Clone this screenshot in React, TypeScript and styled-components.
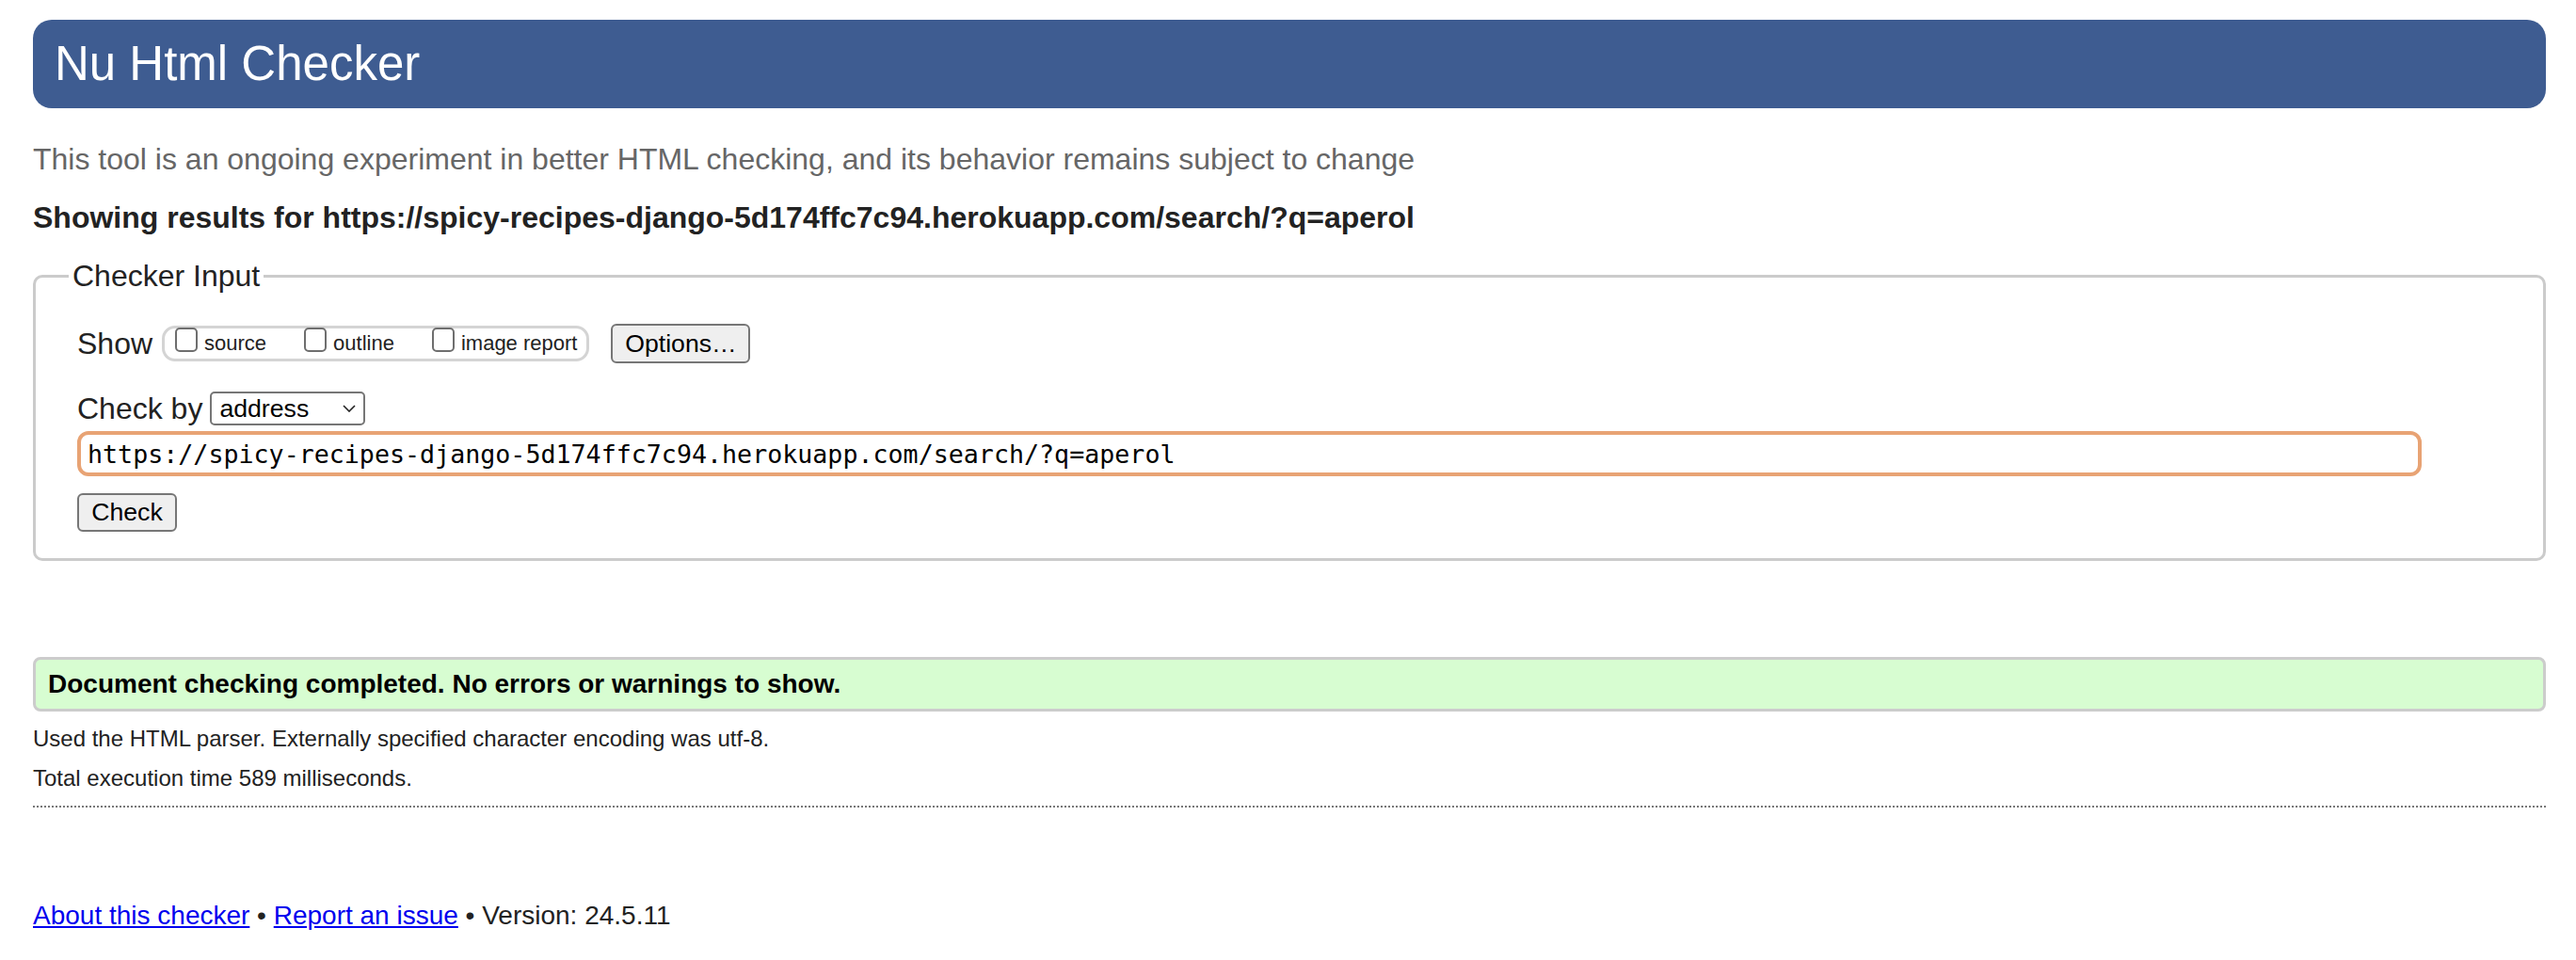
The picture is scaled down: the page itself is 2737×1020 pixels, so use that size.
import React from "react";
import styled, { createGlobalStyle } from "styled-components";

const GlobalStyle = createGlobalStyle`
  html, body {
    margin: 0;
    padding: 0;
    background: #ffffff;
  }
  body {
    font-family: "Liberation Sans", Arial, Helvetica, sans-serif;
    color: #222222;
  }
`;

const Page = styled.div`
  padding: 21px 32px 40px 35px;
`;

const Header = styled.header`
  height: 94px;
  background: #3e5c91;
  border-radius: 20px;
  display: flex;
  align-items: center;
  padding-left: 23px;
`;

const Title = styled.h1`
  margin: 0;
  font-size: 51px;
  font-weight: normal;
  color: #ffffff;
  line-height: 58px;
`;

const Subtitle = styled.p`
  margin: 36px 0 0;
  font-size: 32px;
  line-height: 36px;
  color: #666666;
`;

const Showing = styled.p`
  margin: 26px 0 0;
  font-size: 32px;
  line-height: 36px;
  font-weight: bold;
  color: #222222;
`;

const Fieldset = styled.fieldset`
  margin: 26px 0 0;
  padding: 0 44px 28px 44px;
  border: 3px solid #cbcbcb;
  border-radius: 10px;
  min-width: 0;
`;

const Legend = styled.legend`
  font-size: 32px;
  line-height: 36px;
  padding: 0 4px;
  margin-left: -9px;
  color: #222222;
`;

const Row = styled.div<{ $top: number; $h: number }>`
  display: flex;
  align-items: center;
  margin-top: ${(p) => p.$top}px;
  height: ${(p) => p.$h}px;
`;

const Label = styled.span`
  font-size: 32px;
  color: #222222;
`;

const CheckGroup = styled.div`
  margin-left: 10px;
  height: 32px;
  border: 3px solid #d4d4d4;
  border-radius: 14px;
  padding: 0 10px 0 11px;
  display: flex;
  align-items: flex-start;
`;

const CheckItem = styled.label<{ $last?: boolean }>`
  display: flex;
  align-items: flex-start;
  margin-right: ${(p) => (p.$last ? 0 : 40)}px;
`;

const Box = styled.span`
  box-sizing: border-box;
  width: 24px;
  height: 26px;
  margin-top: -1px;
  border: 2px solid #6e6e6e;
  border-radius: 5px;
  background: #ffffff;
`;

const CheckText = styled.span`
  margin-left: 7px;
  font-size: 22px;
  line-height: 32px;
  color: #222222;
`;

const Button = styled.button<{ $w: number; $h: number }>`
  box-sizing: border-box;
  width: ${(p) => p.$w}px;
  height: ${(p) => p.$h}px;
  padding: 0;
  font-family: "Liberation Sans", Arial, Helvetica, sans-serif;
  font-size: 26.67px;
  color: #000000;
  background: #efefef;
  border: 2px solid #767676;
  border-radius: 6px;
`;

const OptionsButton = styled(Button)`
  margin-left: 23px;
`;

const Select = styled.div`
  box-sizing: border-box;
  margin-left: 8px;
  width: 165px;
  height: 36px;
  border: 2px solid #767676;
  border-radius: 5px;
  padding: 0 8px 0 8px;
  display: flex;
  align-items: center;
  justify-content: space-between;
  font-size: 26.67px;
  color: #000000;
  background: #ffffff;
`;

const UrlInput = styled.div`
  box-sizing: border-box;
  width: 2491px;
  height: 48px;
  border: 4px solid #e8a374;
  border-radius: 12px;
  padding-left: 7px;
  display: flex;
  align-items: center;
  font-family: "DejaVu Sans Mono", "Liberation Mono", monospace;
  font-size: 26.67px;
  color: #000000;
  background: #ffffff;
`;

const Success = styled.div`
  margin-top: 102px;
  box-sizing: border-box;
  height: 58px;
  background: #d7fdd1;
  border: 3px solid #cccccc;
  border-radius: 8px;
  padding-left: 13px;
  display: flex;
  align-items: center;
  font-size: 28px;
  font-weight: bold;
  color: #000000;
`;

const Note = styled.p<{ $top: number }>`
  margin: ${(p) => p.$top}px 0 0;
  font-size: 24px;
  line-height: 36px;
  color: #222222;
`;

const Dotted = styled.div`
  margin-top: 11px;
  border-top: 2px dotted #777777;
`;

const Footer = styled.p`
  margin: 99px 0 0;
  font-size: 28px;
  line-height: 32px;
  color: #222222;
`;

const Link = styled.a`
  color: #0000ee;
  text-decoration: underline;
`;

const Chevron = () => (
  <svg width="14" height="8" viewBox="0 0 14 8" fill="none">
    <path d="M1 1l6 6 6-6" stroke="#222" strokeWidth="1.6" />
  </svg>
);

const URL = "https://spicy-recipes-django-5d174ffc7c94.herokuapp.com/search/?q=aperol";

export default function App() {
  return (
    <>
      <GlobalStyle />
      <Page>
        <Header>
          <Title>Nu Html Checker</Title>
        </Header>
        <Subtitle>
          This tool is an ongoing experiment in better HTML checking, and its behavior remains subject to change
        </Subtitle>
        <Showing>Showing results for {URL}</Showing>
        <Fieldset>
          <Legend>Checker Input</Legend>
          <Row $top={33} $h={42}>
            <Label>Show</Label>
            <CheckGroup>
              <CheckItem>
                <Box />
                <CheckText>source</CheckText>
              </CheckItem>
              <CheckItem>
                <Box />
                <CheckText>outline</CheckText>
              </CheckItem>
              <CheckItem $last>
                <Box />
                <CheckText>image report</CheckText>
              </CheckItem>
            </CheckGroup>
            <OptionsButton $w={148} $h={42}>Options…</OptionsButton>
          </Row>
          <Row $top={30} $h={36}>
            <Label>Check by</Label>
            <Select>
              <span>address</span>
              <Chevron />
            </Select>
          </Row>
          <Row $top={6} $h={48}>
            <UrlInput>{URL}</UrlInput>
          </Row>
          <Row $top={18} $h={41}>
            <Button $w={106} $h={41}>Check</Button>
          </Row>
        </Fieldset>
        <Success>Document checking completed. No errors or warnings to show.</Success>
        <Note $top={11}>Used the HTML parser. Externally specified character encoding was utf-8.</Note>
        <Note $top={6}>Total execution time 589 milliseconds.</Note>
        <Dotted />
        <Footer>
          <Link href="#">About this checker</Link> • <Link href="#">Report an issue</Link> • Version: 24.5.11
        </Footer>
      </Page>
    </>
  );
}
